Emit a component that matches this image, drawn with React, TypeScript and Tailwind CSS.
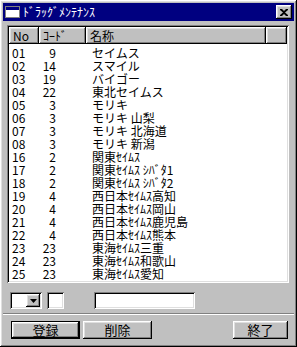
const raised =
  'shadow-[inset_-1px_-1px_0_#000,inset_1px_1px_0_#fff,inset_-2px_-2px_0_#808080,inset_2px_2px_0_#dfdfdf]';
const sunken =
  'shadow-[inset_1px_1px_0_#808080,inset_-1px_-1px_0_#fff,inset_2px_2px_0_#000,inset_-2px_-2px_0_#dfdfdf]';

const rows: [string, string, string][] = [
  ['01', '9', 'セイムス'],
  ['02', '14', 'スマイル'],
  ['03', '19', 'バイゴー'],
  ['04', '22', '東北セイムス'],
  ['05', '3', 'モリキ'],
  ['06', '3', 'モリキ 山梨'],
  ['07', '3', 'モリキ 北海道'],
  ['08', '3', 'モリキ 新潟'],
  ['16', '2', '関東ｾｲﾑｽ'],
  ['17', '2', '関東ｾｲﾑｽ ｼﾊﾞﾀ1'],
  ['18', '2', '関東ｾｲﾑｽ ｼﾊﾞﾀ2'],
  ['19', '4', '西日本ｾｲﾑｽ高知'],
  ['20', '4', '西日本ｾｲﾑｽ岡山'],
  ['21', '4', '西日本ｾｲﾑｽ鹿児島'],
  ['22', '4', '西日本ｾｲﾑｽ熊本'],
  ['23', '23', '東海ｾｲﾑｽ三重'],
  ['24', '23', '東海ｾｲﾑｽ和歌山'],
  ['25', '23', '東海ｾｲﾑｽ愛知'],
];

function HeaderCell({ w, label }: { w: string; label?: string }) {
  return (
    <div className={`${w} h-[17px] bg-[#c0c0c0] ${raised} pl-[4px] leading-[17px] overflow-hidden`}>
      {label}
    </div>
  );
}

function Button({ label, w, isDefault }: { label: string; w: string; isDefault?: boolean }) {
  return (
    <div
      className={`${w} h-[18px] bg-[#c0c0c0] flex items-center justify-center text-[13px] ${
        isDefault ? 'border border-black' : ''
      } ${raised}`}
    >
      {label}
    </div>
  );
}

export default function App() {
  return (
    <div
      className={`w-[297px] h-[347px] bg-[#c0c0c0] p-[3px] flex flex-col text-black text-[12px] ${raised}`}
      style={{ fontFamily: '"Noto Sans CJK JP", "Liberation Sans", sans-serif' }}
    >
      {/* title bar */}
      <div className="h-[18px] bg-[#000080] flex items-center pl-[2px] pr-[2px]">
        <div className="w-[15px] h-[12px] bg-white border border-[#808080] flex flex-col">
          <div className="h-[3px] bg-[#000080]" />
        </div>
        <div className="ml-[3px] text-white text-[12px] leading-[18px]">ﾄﾞﾗｯｸﾞﾒﾝﾃﾅﾝｽ</div>
        <div className="flex-1" />
        <div className={`w-[16px] h-[14px] bg-[#c0c0c0] ${raised} flex items-center justify-center`}>
          <svg width="8" height="7" viewBox="0 0 8 7">
            <path d="M0 0h2l2 2 2-2h2v1L5 3.5 8 6v1H6L4 5 2 7H0V6l3-2.5L0 1z" fill="#000" />
          </svg>
        </div>
      </div>

      {/* list */}
      <div className={`ml-[4px] mt-[4px] w-[282px] h-[258px] bg-white p-[2px] ${sunken}`}>
        <div className="flex">
          <HeaderCell w="w-[30px]" label="No" />
          <HeaderCell w="w-[47px]" label="ｺｰﾄﾞ" />
          <HeaderCell w="w-[180px]" label="名称" />
          <HeaderCell w="flex-1" />
        </div>
        <div className="pt-[2px]">
          {rows.map(([no, code, name]) => (
            <div key={no} className="flex h-[13px] leading-[13px] whitespace-pre">
              <div className="w-[30px] pl-[3px]">{no}</div>
              <div className="w-[47px] pr-[30px] text-right">{code}</div>
              <div className="pl-[6px]">{name}</div>
            </div>
          ))}
        </div>
      </div>

      {/* inputs */}
      <div className="flex mt-[9px] ml-[7px] h-[17px]">
        <div className={`w-[32px] h-[17px] bg-white ${sunken} flex justify-end p-[2px]`}>
          <div className={`w-[14px] h-[13px] bg-[#c0c0c0] ${raised} flex items-center justify-center`}>
            <svg width="7" height="4" viewBox="0 0 7 4">
              <path d="M0 0h7L3.5 4z" fill="#000" />
            </svg>
          </div>
        </div>
        <div className={`ml-[5px] w-[17px] h-[17px] bg-white ${sunken}`} />
        <div className={`ml-[30px] w-[101px] h-[17px] bg-white ${sunken}`} />
      </div>

      {/* separator */}
      <div className="mt-[4px] h-[1px] bg-[#808080]" />
      <div className="h-[1px] bg-white" />

      {/* buttons */}
      <div className="flex mt-[6px] ml-[8px]">
        <Button label="登録" w="w-[69px]" isDefault />
        <div className="ml-[3px]">
          <Button label="削除" w="w-[69px]" />
        </div>
        <div className="ml-[81px]">
          <Button label="終了" w="w-[55px]" />
        </div>
      </div>
    </div>
  );
}
